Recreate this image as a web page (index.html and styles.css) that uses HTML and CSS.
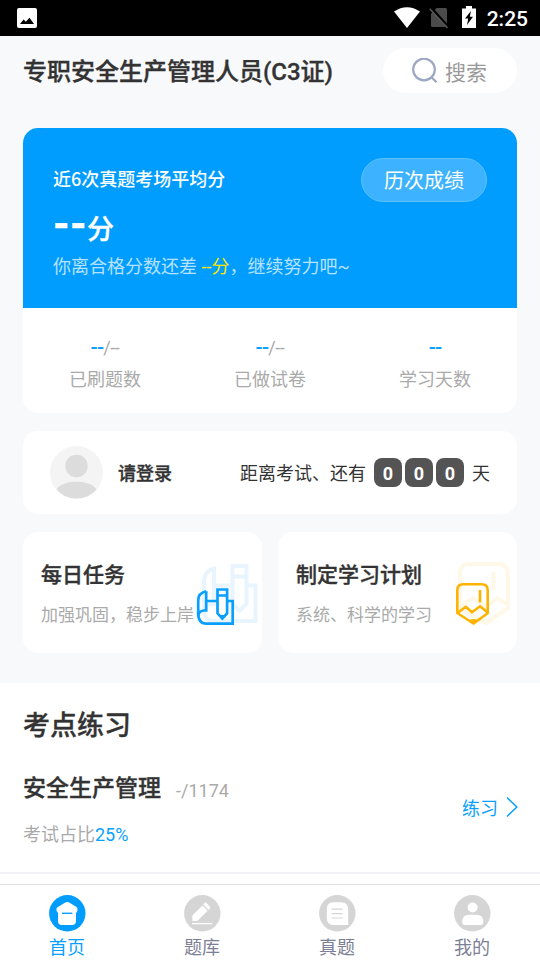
FILE: index.html
```html
<!DOCTYPE html>
<html lang="zh-CN">
<head>
<meta charset="utf-8">
<title>首页</title>
<link rel="stylesheet" href="styles.css">
</head>
<body>
<div class="app">
  <div class="status">
    <svg class="status-photo" width="20" height="20" viewBox="0 0 20 20"><rect width="20" height="20" rx="2" fill="#fff"/><path d="M3 16l3.600-4.500 2.200 2.300 3.700-4 4.500 6.200z"/></svg>
    <div class="status-right">
      <svg width="26" height="21" viewBox="0 0 26 21"><path d="M0 4.500Q13-4 26 4.500L13 21z" fill="#fff"/></svg>
      <svg class="sim" width="20" height="22" viewBox="0 0 20 22"><path d="M2 7L7.500 1H16.500Q18 1 18 2.500v16Q18 20 16.500 20h-13Q2 20 2 18.500z" fill="#4b4b4b"/><path d="M2 1l17 19" stroke="#000" stroke-width="3"/><path d="M.700 1.800l17.800 19.200" stroke="#5a5a5a" stroke-width="1.500"/></svg>
      <svg class="battery" width="14" height="22" viewBox="0 0 14 22"><path d="M0 2.500h4V0h6v2.500h4V22H0z" fill="#fff"/><path d="M9 5L3 12.500h3.200L5 19l6-8.200H7.800z"/></svg>
      <span class="clock">2:25</span>
    </div>
  </div>

  <header class="header">
    <h1 class="title">专职安全生产管理人员(C3证)</h1>
    <div class="search">
      <svg width="26" height="26" viewBox="0 0 26 26" fill="none" stroke="#9ba7c3" stroke-width="2.200"><circle cx="12" cy="11.500" r="10.800"/><path d="M19.300 19l5.200 5.200"/></svg>
      <span>搜索</span>
    </div>
  </header>

  <main class="main">
    <section class="card score">
      <div class="score-top">
        <div class="score-text">
          <div class="score-label">近6次真题考场平均分</div>
          <div class="score-value"><span class="dashes">--</span>分</div>
          <div class="score-tip">你离合格分数还差 <span class="yellow">--分</span>，继续努力吧~</div>
        </div>
        <div class="history">历次成绩</div>
      </div>
      <div class="stats">
        <div class="stat"><div class="stat-num"><b>--</b>/--</div><div class="stat-name">已刷题数</div></div>
        <div class="stat"><div class="stat-num"><b>--</b>/--</div><div class="stat-name">已做试卷</div></div>
        <div class="stat"><div class="stat-num"><b>--</b></div><div class="stat-name">学习天数</div></div>
      </div>
    </section>

    <section class="card login">
      <svg class="avatar" width="53" height="53" viewBox="0 0 53 53"><circle cx="26.500" cy="26.500" r="26.500" fill="#f4f4f4"/><circle cx="26.500" cy="20" r="11.200" fill="#dcdcdc"/><path d="M6.500 43.500C12 33 41 33 46.500 43.500A26.500 26.500 0 0 1 6.500 43.500z" fill="#dcdcdc"/></svg>
      <span class="login-name">请登录</span>
      <span class="countdown">距离考试、还有</span>
      <div class="digits"><span class="digit">0</span><span class="digit">0</span><span class="digit">0</span></div>
      <span class="day">天</span>
    </section>

    <div class="tasks">
      <section class="card task">
        <div class="task-title">每日任务</div>
        <div class="task-sub">加强巩固，稳步上岸</div>
        <svg class="task-icon" width="64" height="66" viewBox="0 0 64 66" fill="none">
          <g stroke="#e8f5ff" stroke-width="4"><path d="M18 8.500V45"/><path d="M20 7.500h-2Q8 10 8 22v27q0 11 10 11h41.500V24.500H52M35 24.500H20"/><path d="M8 50q0-7 8-7h4"/><path d="M36.500 5h14v38L43.500 50l-7-7zM36.500 15.500h14"/></g>
          <g stroke="#089fff" stroke-width="2.700"><path d="M10.200 30.200v19.300h-2q-5 0-6 5V39q0-7 8-8.800"/><path d="M2.200 52q0 10.700 8 10.700h26.500V40h-5M21.500 40H10.200"/><path d="M21.500 28.500h9.600v24L26.300 57.500l-4.800-5.200zM21.500 34.500h9.600"/><path d="M23 54h6.600l-3.300 4z" fill="#089fff" stroke="none"/></g>
        </svg>
      </section>
      <section class="card task">
        <div class="task-title">制定学习计划</div>
        <div class="task-sub">系统、科学的学习</div>
        <svg class="task-icon plan-icon" width="58" height="68" viewBox="0 0 58 68" fill="none" stroke-linejoin="round">
          <g stroke="#fff8e8" stroke-width="4"><path d="M14 4h29q10 0 10 10v34L31 63 5 49V14Q5 4 14 4z"/><path d="M5 46l13-8 13 9 11-9 11 7"/><path d="M38.500 12v18"/><path d="M24 61q8-5 15 0l-8 4z" fill="#fff8e8" stroke="none"/></g>
          <g stroke="#fdb300" stroke-width="2.600"><path d="M8.300 24.300h18.400q6 0 6 6v23L18.500 63.500 2.300 53V30.300q0-6 6-6z"/><path d="M2.800 52.700l8-6 6.200 5.600 8-6 8 6.500"/><path d="M25 30V42.500"/><path d="M12.500 60.500q6-3 12 0l-6 4z" fill="#fdb300" stroke="none"/></g>
        </svg>
      </section>
    </div>
  </main>

  <section class="practice">
    <h2 class="practice-title">考点练习</h2>
    <div class="item">
      <div class="item-info">
        <div class="item-head"><span class="item-name">安全生产管理</span><span class="item-count">-/1174</span></div>
        <div class="item-rate">考试占比<span class="blue">25%</span></div>
      </div>
      <div class="go">练习<svg width="12" height="22" viewBox="0 0 12 22" fill="none" stroke="#089fff" stroke-width="1.500"><path d="M1 1.500l9.800 9.500L1 20.500"/></svg></div>
    </div>
  </section>

  <nav class="tabs">
    <div class="tab active"><svg width="37" height="37" viewBox="0 0 37 37"><circle cx="18.300" cy="18.300" r="18.200" fill="#009dff"/><path d="M15.500 8Q18.300 6 21 8l6.500 4q1.700 1.500.800 4-.500 1.500-1.300 1.700V26q0 4-4 4h-10q-4 0-4-4v-8.300Q7 16.500 7.400 14q.300-1.300 1.500-2z" fill="#fff"/><path d="M13 18.300h10.300" stroke="#089fff" stroke-width="1.400"/></svg><span>首页</span></div>
    <div class="tab"><svg width="37" height="37" viewBox="0 0 37 37"><circle cx="18.300" cy="18.300" r="18.200" fill="#d5d5d5"/><g fill="#fff"><path d="M8.300 20.600l10.200-10 5.100 5.100L13.400 26H8.300z"/><path d="M19.400 9.500l1.200-1.700q.800-.700 1.600 0l3.800 4q.700.800 0 1.600l-1.400 1.600z"/><path d="M8 27.900h20.300v1.400H8z"/></g></svg><span>题库</span></div>
    <div class="tab"><svg width="37" height="37" viewBox="0 0 37 37"><circle cx="18.300" cy="18.300" r="18.200" fill="#d5d5d5"/><path d="M14.500 7.200h7.500q7.200 0 7.200 7.200V30H14.500q-6.700 0-6.700-6.700v-9.400q0-6.700 6.700-6.700z" fill="#fff"/><path d="M12.600 14.200h11M12.600 18.700h11M12.600 23h11" stroke="#d5d5d5" stroke-width="1.200"/></svg><span>真题</span></div>
    <div class="tab"><svg width="37" height="37" viewBox="0 0 37 37"><circle cx="18.300" cy="18.300" r="18.200" fill="#d5d5d5"/><g fill="#fff"><circle cx="18.600" cy="12.500" r="5"/><path d="M15 19.700h7.700q6.700 0 6.700 7.300 0 3-2.700 3H10.900Q8.200 30 8.200 27q0-7.300 6.800-7.300z"/></g></svg><span>我的</span></div>
  </nav>
</div>
</body>
</html>
```

FILE: styles.css
```css
* { box-sizing: border-box; margin: 0; padding: 0; }
body { background: #fff; font-family: Roboto, "Noto Sans CJK SC", sans-serif; color: #333; }
svg { display: block; flex: none; }
.app { width: 540px; height: 960px; display: flex; flex-direction: column; overflow: hidden; background: #f8f9fb; white-space: nowrap; }

.status { height: 36px; flex: none; background: #000; display: flex; justify-content: space-between; padding: 7px 12px 0 17px; }
.status-photo { margin-top: 1px; }
.status-right { display: flex; color: #fff; }
.sim { margin-left: 9px; }
.battery { margin: -1px 11px 0 13px; }
.clock { font-size: 21px; line-height: 24px; font-weight: 500; }

.title, .task-title, .practice-title, .item-name, .login-name { -webkit-text-stroke: .35px #333; }

.header { height: 92px; flex: none; display: flex; justify-content: space-between; align-items: flex-start; padding: 12px 23px 0; }
.title { font-size: 24px; line-height: 48px; font-weight: 500; }
.search { width: 134px; height: 45px; border-radius: 23px; background: #fff; display: flex; align-items: center; justify-content: center; gap: 7px; padding-right: 1px; font-size: 21px; color: #999; }

.main { height: 555px; flex: none; padding: 0 23px; display: flex; flex-direction: column; gap: 18px; }
.card { background: #fff; border-radius: 15px; overflow: hidden; }
.score { height: 285px; }
.score-top { height: 180px; background: #009dff; color: #fff; display: flex; justify-content: space-between; padding: 30px 30px 0; }
.score-label { font-family: "Noto Sans CJK SC", sans-serif; font-size: 18px; line-height: 41px; height: 42px; font-weight: 500; }
.score-value { font-size: 27px; line-height: 60px; height: 58px; font-weight: 500; -webkit-text-stroke: .35px #fff; }
.dashes { font-size: 42px; font-weight: 700; line-height: 1; letter-spacing: .5px; }
.score-tip { font-size: 18px; line-height: 18px; color: #b8e2ff; }
.yellow { color: #ffe600; }
.history { width: 126px; height: 44px; border-radius: 22px; border: 1px solid #5bc0ff; background: #3db3ff; font-size: 20px; line-height: 45px; text-align: center; }
.stats { height: 105px; display: grid; grid-template-columns: repeat(3, 165px); padding-top: 25px; text-align: center; color: #aaa; font-size: 18px; }
.stat { padding-right: 1px; }
.stat-num { line-height: 28px; height: 28px; letter-spacing: -.4px; }
.stat-num b { color: #089fff; font-size: 21px; font-weight: 500; letter-spacing: -.8px; }
.stat-name { line-height: 38px; }

.login { height: 83px; display: flex; align-items: center; padding: 0 27px; font-size: 18px; line-height: 26px; }
.login-name { margin: 2px 0 0 15px; font-weight: 500; }
.countdown { margin: 2px 0 0 auto; }
.day { margin-top: 2px; }
.digits { display: flex; gap: 3px; margin: 0 8px; }
.digit { width: 28px; height: 29px; border-radius: 8px; background: #545454; color: #fff; font-weight: 700; line-height: 31px; text-align: center; }

.tasks { display: grid; grid-template-columns: 239px 239px; gap: 16px; }
.task { position: relative; height: 121px; padding: 25px 18px 0; }
.task-title { font-size: 21px; line-height: 37px; height: 38px; font-weight: 500; }
.task-sub { font-size: 17px; line-height: 40px; color: #aaa; }
.task-icon { position: absolute; left: 173px; top: 29px; }
.plan-icon { left: 177px; top: 28px; }

.practice { flex: 1; background: #fff; }
.practice-title { font-size: 27px; line-height: 40px; font-weight: 500; padding: 23px 23px 0; }
.item { height: 128px; display: flex; justify-content: space-between; padding: 20px 22px 0 23px; border-bottom: 2px solid #f1f1f6; }
.item-head { display: flex; align-items: center; height: 40px; }
.item-name { font-size: 23px; font-weight: 500; }
.item-count { margin: 8px 0 0 15px; font-size: 18px; color: #aaa; }
.item-rate { font-size: 18px; line-height: 57px; color: #aaa; }
.blue { color: #089fff; }
.go { display: flex; align-items: center; gap: 8px; height: 82px; font-size: 18px; color: #089fff; }

.tabs { height: 76px; flex: none; display: grid; grid-template-columns: repeat(4, 135px); background: #fff; border-top: 1px solid #e2e2e2; }
.tab { display: flex; flex-direction: column; align-items: center; padding: 10px 1px 0 0; font-size: 18px; line-height: 32px; color: #7c8095; }
.active { color: #089fff; }
```
